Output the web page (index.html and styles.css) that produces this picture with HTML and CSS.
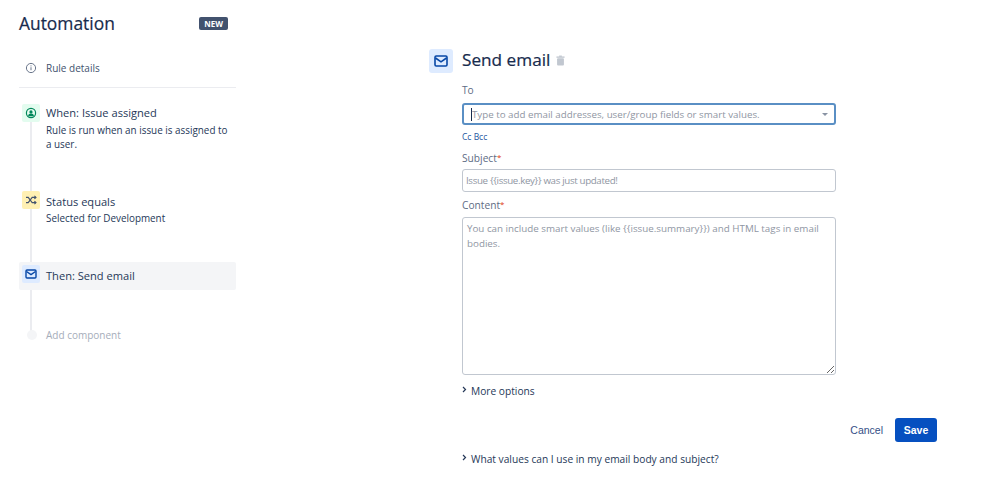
FILE: index.html
```html
<!DOCTYPE html>
<html lang="en">
<head>
    <meta charset="UTF-8">
    <title>Automation - Send email</title>
    <link rel="stylesheet" href="styles.css">
</head>
<body>
    <div class="page">
        <div class="sidebar">
            <div class="sidebar-head">
                <h2>Automation</h2>
                <span class="badge">NEW</span>
            </div>
            <div class="rule-details">
                <svg class="info-icon" width="12" height="12" viewBox="0 0 12 12">
                    <circle cx="6" cy="6" r="4.6" fill="none" stroke="#6b778c" stroke-width="1"/>
                    <rect x="5.5" y="5.2" width="1" height="3" fill="#6b778c"/>
                    <rect x="5.5" y="3.4" width="1" height="1" fill="#6b778c"/>
                </svg>
                <span>Rule details</span>
            </div>

            <div class="steps">
                <div class="timeline"></div>
                <div class="step step-when">
                    <div class="step-icon icon-green">
                        <svg width="12" height="12" viewBox="0 0 12 12">
                            <circle cx="6" cy="6" r="5.2" fill="#00875a"/>
                            <circle cx="6" cy="6" r="4" fill="#e3fcef"/>
                            <circle cx="6" cy="4.9" r="1.6" fill="#00875a"/>
                            <path d="M3 9.2c.4-2 1.6-2.6 3-2.6s2.6.6 3 2.6z" fill="#00875a"/>
                        </svg>
                    </div>
                    <div class="step-text">
                        <div class="step-title">When: Issue assigned</div>
                        <div class="step-desc">Rule is run when an issue is assigned to a user.</div>
                    </div>
                </div>
                <div class="step step-status">
                    <div class="step-icon icon-yellow">
                        <svg width="12" height="12" viewBox="0 0 12 12" fill="none" stroke="#42526e" stroke-width="1.1">
                            <path d="M1 3.4h2.2l4 5.2H11"/>
                            <path d="M1 8.6h2.2l4-5.2H11"/>
                            <path d="M9.4 1.9 11 3.4 9.4 4.9M9.4 7.1 11 8.6 9.4 10.1"/>
                        </svg>
                    </div>
                    <div class="step-text">
                        <div class="step-title">Status equals</div>
                        <div class="step-desc">Selected for Development</div>
                    </div>
                </div>
                <div class="step step-then">
                    <div class="step-icon icon-blue">
                        <svg width="12" height="10" viewBox="0 0 12 10" fill="none" stroke="#0747a6" stroke-width="1.4">
                            <rect x="1" y="1" width="10" height="8" rx="1"/>
                            <path d="M1.5 2.5 6 5.6l4.500-3.100"/>
                        </svg>
                    </div>
                    <div class="step-title">Then: Send email</div>
                </div>
                <div class="step step-add">
                    <div class="add-dot"></div>
                    <div class="add-text">Add component</div>
                </div>
            </div>
        </div>

        <div class="main">
            <div class="main-head">
                <div class="main-icon">
                    <svg width="14" height="12" viewBox="0 0 14 12" fill="none" stroke="#0747a6" stroke-width="1.6">
                        <rect x="1" y="1" width="12" height="10" rx="1.200"/>
                        <path d="M1.500 3 7 6.800 12.500 3"/>
                    </svg>
                </div>
                <h1>Send email</h1>
                <svg class="trash" width="9" height="11" viewBox="0 0 10 12">
                    <rect x="3.500" y="0.500" width="3" height="1.500" fill="#c1c7d0"/>
                    <rect x="0.500" y="1.500" width="9" height="1.500" fill="#c1c7d0"/>
                    <rect x="1.200" y="3.500" width="7.600" height="8" rx="1" fill="#c1c7d0"/>
                </svg>
            </div>

            <div class="form">
                <label class="field-label">To</label>
                <div class="select-box">
                    <span class="caret"></span>
                    <span class="placeholder">Type to add email addresses, user/group fields or smart values.</span>
                    <span class="arrow"></span>
                </div>
                <div class="cc-links">Cc Bcc</div>

                <label class="field-label label-subject">Subject<span class="req">*</span></label>
                <div class="text-box"><span class="placeholder subject-text">Issue {{issue.key}} was just updated!</span></div>

                <label class="field-label label-content">Content<span class="req">*</span></label>
                <textarea class="area-box" placeholder="You can include smart values (like {{issue.summary}}) and HTML tags in email bodies."></textarea>

                <div class="toggle toggle-more">
                    <svg width="5" height="7" viewBox="0 0 5 7" fill="none" stroke="#253858" stroke-width="1.200"><path d="M1 1l2.500 2.500L1 6"/></svg>
                    <span>More options</span>
                </div>

                <div class="actions">
                    <a class="cancel">Cancel</a>
                    <button class="save">Save</button>
                </div>

                <div class="toggle">
                    <svg width="5" height="7" viewBox="0 0 5 7" fill="none" stroke="#253858" stroke-width="1.200"><path d="M1 1l2.500 2.500L1 6"/></svg>
                    <span>What values can I use in my email body and subject?</span>
                </div>
            </div>
        </div>
    </div>
</body>
</html>
```

FILE: styles.css
```css
* {
    margin: 0;
    padding: 0;
    box-sizing: border-box;
}

body {
    background-color: #fff;
    color: #253858;
    font-family: 'Open Sans', 'Noto Sans', sans-serif;
    font-size: 10px;
    overflow: hidden;
}

.page {
    display: flex;
    height: 485px;
}

.sidebar {
    width: 217px;
    margin-left: 19px;
    flex-shrink: 0;
}

.sidebar-head {
    display: flex;
    justify-content: space-between;
    align-items: center;
    height: 24px;
    margin-top: 11px;
    padding-right: 8px;
}

.sidebar-head h2 {
    font-size: 17.400px;
    font-weight: 400;
    color: #172b4d;
    -webkit-text-stroke: 0.2px #172b4d;
}

.badge {
    background-color: #42526e;
    color: #fff;
    font-size: 8px;
    font-weight: 700;
    line-height: 13px;
    padding: 0 5px;
    border-radius: 2px;
}

.rule-details {
    display: flex;
    align-items: center;
    gap: 9px;
    height: 53px;
    padding: 14px 0 0 6px;
    border-bottom: 1px solid #ebecf0;
    color: #42526e;
    font-size: 10px;
}

.steps {
    position: relative;
    padding-top: 16px;
}

.timeline {
    position: absolute;
    left: 11px;
    top: 29px;
    width: 2px;
    height: 217px;
    background-color: #ebecf0;
}

.step {
    position: relative;
    display: flex;
    gap: 6px;
    padding-left: 3px;
}

.step-icon {
    width: 18px;
    height: 18px;
    display: flex;
    align-items: center;
    justify-content: center;
    border-radius: 2px;
    flex-shrink: 0;
}

.icon-green { background-color: #e3fcef; }
.icon-yellow { background-color: #fff0b3; }
.icon-blue { background-color: #deebff; }

.step-text {
    max-width: 184px;
}

.step-title {
    font-size: 11.100px;
    line-height: 18px;
    color: #253858;
}

.step-desc {
    font-size: 9.900px;
    line-height: 14px;
    color: #253858;
}

.step-when { height: 87px; }
.step-status { height: 71px; }

.step-when .step-desc {
    margin-top: 1px;
}

.step-status .step-text {
    margin-top: 2px;
}

.step-then {
    height: 28px;
    align-items: center;
    background-color: #f4f5f7;
    border-radius: 2px;
}

.step-then .step-icon {
    margin-top: -4px;
}

.step-add {
    align-items: center;
    margin-top: 36px;
    padding-left: 8px;
    gap: 9px;
}

.add-dot {
    width: 10px;
    height: 10px;
    border-radius: 50%;
    background-color: #f4f5f7;
}

.add-text {
    color: #a5adba;
    font-size: 10px;
    line-height: 18px;
}

.main {
    margin-left: 193px;
    width: 508px;
}

.main-head {
    display: flex;
    align-items: center;
    height: 24px;
    margin-top: 49px;
}

.main-icon {
    width: 24px;
    height: 24px;
    display: flex;
    align-items: center;
    justify-content: center;
    background-color: #deebff;
    border-radius: 3px;
}

.main-head h1 {
    font-size: 17.200px;
    font-weight: 400;
    color: #172b4d;
    margin-left: 9px;
    margin-top: -3px;
    -webkit-text-stroke: 0.2px #172b4d;
}

.trash {
    margin-left: 6px;
    margin-top: -2px;
}

.form {
    margin-left: 33px;
    padding-top: 10px;
}

.field-label {
    display: block;
    font-size: 10.200px;
    line-height: 14px;
    color: #5e6c84;
}

.req {
    color: #de350b;
    font-size: 8px;
    line-height: 0;
    vertical-align: 2px;
}

.select-box {
    display: flex;
    align-items: center;
    width: 374px;
    height: 22px;
    margin-top: 6px;
    padding: 0 6px 0 7px;
    border: 2px solid #5a8fc4;
    border-radius: 3px;
}

.caret {
    width: 1px;
    height: 13px;
    background-color: #172b4d;
    flex-shrink: 0;
}

.select-box .placeholder {
    flex: 1;
}

.arrow {
    width: 0;
    height: 0;
    border-left: 3.500px solid transparent;
    border-right: 3.500px solid transparent;
    border-top: 3.500px solid #8993a4;
}

.placeholder {
    color: #8f96a3;
    font-size: 9.750px;
}

.subject-text {
    letter-spacing: -0.350px;
}

.cc-links {
    font-size: 8.500px;
    line-height: 12px;
    margin-top: 6px;
    color: #1d55a0;
}

.label-subject { margin-top: 8px; }

.text-box {
    display: flex;
    align-items: center;
    width: 374px;
    height: 23px;
    margin-top: 4px;
    padding: 0 3px;
    border: 1px solid #c1c7d0;
    border-radius: 3px;
}

.label-content { margin-top: 6px; }

.area-box {
    display: block;
    width: 374px;
    height: 158px;
    margin-top: 5px;
    padding: 3px 4px;
    border: 1px solid #c1c7d0;
    border-radius: 3px;
    font-family: inherit;
    font-size: 9.800px;
    line-height: 15px;
    outline: none;
}

.area-box::placeholder {
    color: #8f96a3;
    opacity: 1;
}

.toggle {
    display: flex;
    align-items: center;
    gap: 4px;
    font-size: 10.200px;
    line-height: 14px;
    color: #253858;
}

.toggle svg {
    margin-top: -3px;
}

.toggle-more {
    margin-top: 9px;
}

.actions {
    display: flex;
    justify-content: flex-end;
    align-items: center;
    gap: 12px;
    width: 475px;
    margin-top: 20px;
    margin-bottom: 10px;
}

.cancel {
    font-family: 'Liberation Sans', Arial, sans-serif;
    font-size: 10.500px;
    color: #344f86;
}

.save {
    width: 42px;
    height: 24px;
    background-color: #0650c0;
    color: #fff;
    border: none;
    border-radius: 3px;
    font-family: 'Liberation Sans', Arial, sans-serif;
    font-size: 10.500px;
    font-weight: 700;
}
```
